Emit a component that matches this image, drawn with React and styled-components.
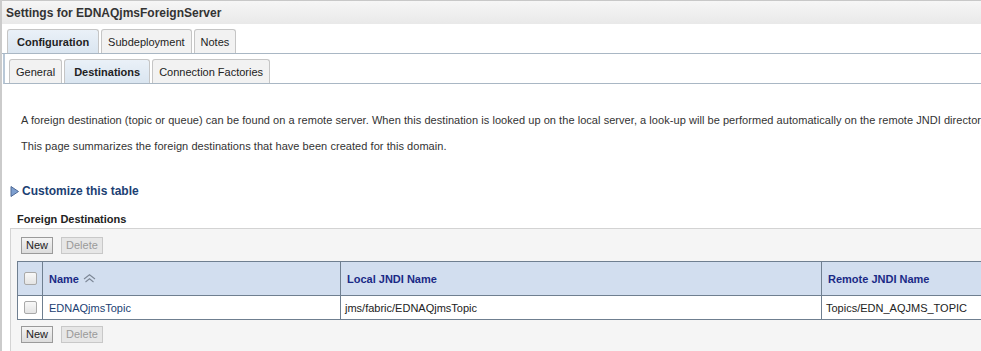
import React from 'react'
import styled, { createGlobalStyle } from 'styled-components'

const GlobalStyle = createGlobalStyle`
  body {
    margin: 0;
    background: #ffffff;
    font-family: "Liberation Sans", Arial, sans-serif;
    font-size: 11px;
    color: #333333;
  }
`

const Page = styled.div`
  border-left: 2px solid #cbcbcb;
  min-height: 351px;
  overflow: hidden;
`

const TitleBar = styled.div`
  height: 23px;
  border-top: 1px solid #c8c8c8;
  background: linear-gradient(#f6f6f6, #e9e9e9);
  display: flex;
  align-items: center;
  padding-left: 4px;
  font-weight: bold;
  font-size: 12px;
  color: #333;
`

const TabBar = styled.div`
  display: flex;
  align-items: flex-end;
  gap: 2px;
  padding: 5px 0 0 ${p => p.$sub ? '4px' : '5px'};
  border-bottom: 1px solid #a9b7c4;
  ${p => p.$sub && `
    margin-left: 1px;
    border-left: 2px solid #b9c8d7;
  `}
`

const Tab = styled.div`
  height: 24px;
  box-sizing: border-box;
  display: flex;
  align-items: center;
  padding: 0 ${p => p.$active ? '9px' : '6px'};
  border: 1px solid #c5c5c5;
  border-bottom: none;
  border-radius: 3px 3px 0 0;
  background: ${p => p.$active ? 'linear-gradient(#eaf1f8, #dae5f0)' : '#f2f2f2'};
  font-weight: ${p => p.$active ? 'bold' : 'normal'};
  color: #222;
  white-space: nowrap;
`

const Body = styled.div`
  padding: 30px 0 0 0;
`

const Para = styled.p`
  margin: 0 0 14px 19px;
  line-height: 12px;
  letter-spacing: 0.05px;
  white-space: nowrap;
`

const Customize = styled.div`
  display: flex;
  align-items: center;
  gap: 3px;
  margin: 32px 0 0 8px;
  font-weight: bold;
  font-size: 12px;
  color: #1c3f73;
`

const SectionTitle = styled.div`
  margin: 15px 0 0 15px;
  font-weight: bold;
  font-size: 11px;
  color: #222;
`

const Panel = styled.div`
  margin: 3px 0 0 8px;
  border: 1px solid #d3d3d3;
  border-right: none;
  background: #f5f5f5;
  padding: 8px 0 10px 6px;
`

const ButtonRow = styled.div`
  display: flex;
  gap: 8px;
  margin-left: 4px;
`

const Button = styled.button`
  height: 17px;
  padding: 0 4px;
  font-family: "Liberation Sans", Arial, sans-serif;
  font-size: 11px;
  border: 1px solid ${p => p.disabled ? '#c8c8c8' : '#9a9a9a'};
  background: ${p => p.disabled ? '#e6e6e6' : 'linear-gradient(#f4f4f4, #dcdcdc)'};
  color: ${p => p.disabled ? '#9a9a9a' : '#222'};
  line-height: 15px;
`

const Table = styled.table`
  border-collapse: collapse;
  margin: 7px 0 6px 0;
  width: 1000px;
  table-layout: fixed;
`

const HeadCell = styled.th`
  height: 34px;
  box-sizing: border-box;
  background: #d2deef;
  border: 1px solid #6f7f90;
  text-align: left;
  padding: 0 0 0 6px;
  color: #1a2a86;
  font-weight: bold;
  font-size: 11px;
`

const Cell = styled.td`
  height: 24px;
  box-sizing: border-box;
  background: #ffffff;
  border: 1px solid #6f7f90;
  padding: 0 0 0 ${p => p.$pad || 6}px;
  color: ${p => p.$link ? '#1c3f73' : '#222'};
`

const Check = styled.span`
  display: inline-block;
  width: 11px;
  height: 11px;
  border: 1px solid #a9a9a9;
  border-radius: 2px;
  background: linear-gradient(#f8f8f8, #e4e4e4);
  vertical-align: middle;
`

const Arrow = () => (
  <svg width="9" height="11" viewBox="0 0 9 11">
    <path d="M1 0.5 L8.5 5.5 L1 10.5 Z" fill="#7e9fcf" stroke="#4e6a97" strokeWidth="1" />
  </svg>
)

const SortIcon = () => (
  <svg width="13" height="9" viewBox="0 0 13 9" style={{ marginLeft: 4 }}>
    <path d="M1 5 L6.5 0.8 L12 5 M2.5 8 L6.5 4.8 L10.5 8" fill="none" stroke="#7d8796" strokeWidth="1.1" />
  </svg>
)

export default function App() {
  return (
    <Page>
      <GlobalStyle />
      <TitleBar>Settings for EDNAQjmsForeignServer</TitleBar>
      <TabBar>
        <Tab $active>Configuration</Tab>
        <Tab>Subdeployment</Tab>
        <Tab>Notes</Tab>
      </TabBar>
      <TabBar $sub>
        <Tab>General</Tab>
        <Tab $active>Destinations</Tab>
        <Tab>Connection Factories</Tab>
      </TabBar>
      <Body>
        <Para>A foreign destination (topic or queue) can be found on a remote server. When this destination is looked up on the local server, a look-up will be performed automatically on the remote JNDI directory.</Para>
        <Para>This page summarizes the foreign destinations that have been created for this domain.</Para>
        <Customize><Arrow />Customize this table</Customize>
        <SectionTitle>Foreign Destinations</SectionTitle>
        <Panel>
          <ButtonRow>
            <Button>New</Button>
            <Button disabled>Delete</Button>
          </ButtonRow>
          <Table>
            <colgroup>
              <col style={{ width: 25 }} />
              <col style={{ width: 298 }} />
              <col style={{ width: 481 }} />
              <col />
            </colgroup>
            <thead>
              <tr>
                <HeadCell><Check /></HeadCell>
                <HeadCell>Name<SortIcon /></HeadCell>
                <HeadCell>Local JNDI Name</HeadCell>
                <HeadCell>Remote JNDI Name</HeadCell>
              </tr>
            </thead>
            <tbody>
              <tr>
                <Cell><Check /></Cell>
                <Cell $link>EDNAQjmsTopic</Cell>
                <Cell $pad={4}>jms/fabric/EDNAQjmsTopic</Cell>
                <Cell $pad={4}>Topics/EDN_AQJMS_TOPIC</Cell>
              </tr>
            </tbody>
          </Table>
          <ButtonRow>
            <Button>New</Button>
            <Button disabled>Delete</Button>
          </ButtonRow>
        </Panel>
      </Body>
    </Page>
  )
}
